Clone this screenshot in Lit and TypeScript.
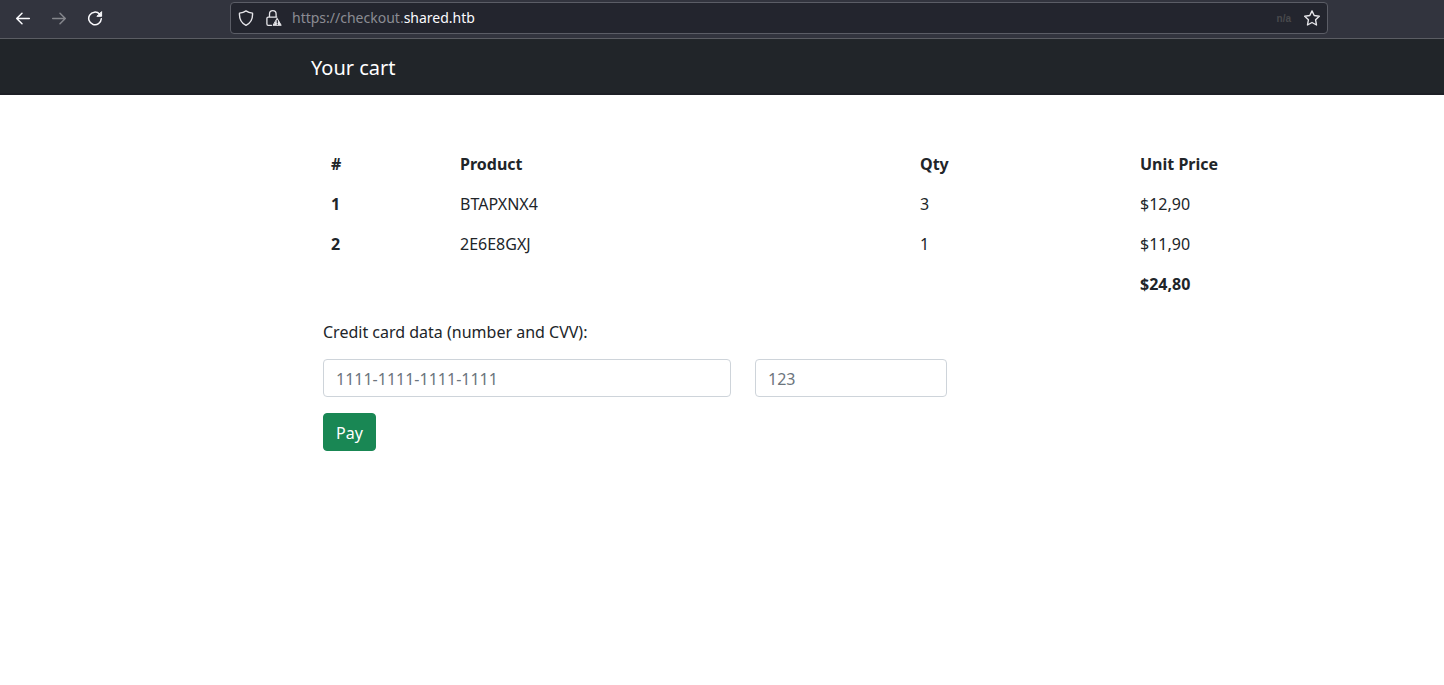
import { LitElement, html, css } from "lit";
import { customElement } from "lit/decorators.js";

interface CartItem {
  product: string;
  qty: number;
  price: string;
}

@customElement("browser-bar")
export class BrowserBar extends LitElement {
  static styles = css`
    :host {
      display: block;
    }
    .bar {
      display: flex;
      align-items: center;
      box-sizing: border-box;
      height: 39px;
      padding: 0 116px 3px 12px;
      background: #32343e;
      border-bottom: 1px solid #5b5d63;
    }
    .nav {
      display: flex;
      gap: 14px;
      margin-right: 124px;
    }
    button {
      display: grid;
      place-items: center;
      width: 22px;
      height: 22px;
      padding: 0;
      border: 0;
      background: none;
      color: #fbfbfe;
    }
    button:disabled {
      color: #85868c;
    }
    svg {
      display: block;
      fill: none;
      stroke: currentColor;
      stroke-width: 1.5;
      stroke-linecap: round;
      stroke-linejoin: round;
    }
    .address {
      display: flex;
      flex: 1;
      align-items: center;
      box-sizing: border-box;
      height: 32px;
      padding: 0 4px;
      background: #23252e;
      border: 1px solid #5b5d66;
      border-radius: 4px;
      color: #fbfbfe;
    }
    .address button {
      color: #e6e6ea;
    }
    .security {
      margin: 0 7px 0 6px;
    }
    .url {
      flex: 1;
      font-size: 14px;
      line-height: 20px;
      color: #8b8c93;
    }
    .host {
      color: #fbfbfe;
    }
    .tag {
      margin-right: 10px;
      padding-top: 2px;
      font: bold 10px/14px "Liberation Sans", Arial, sans-serif;
      color: #48494c;
    }
  `;

  render() {
    return html`
      <div class="bar">
        <div class="nav">
          <button aria-label="Back">
            <svg width="16" height="16" viewBox="0 0 16 16">
              <path d="M14.3 8.5H1.7M7 3.2L1.7 8.5L7 13.8" />
            </svg>
          </button>
          <button aria-label="Forward" disabled>
            <svg width="16" height="16" viewBox="0 0 16 16">
              <path d="M1.7 8.5h12.6M9 3.2l5.3 5.3L9 13.8" />
            </svg>
          </button>
          <button aria-label="Reload">
            <svg width="16" height="16" viewBox="0 0 16 16">
              <path d="M12.6 4.1A6.3 6.3 0 1 0 14.3 8.8" />
              <path d="M14.6 2v4.3h-4.3z" fill="currentColor" stroke-width="1" />
            </svg>
          </button>
        </div>
        <div class="address">
          <button aria-label="Tracking protection">
            <svg width="16" height="16" viewBox="0 0 16 16">
              <path d="M8 .9C6.2 2.2 3.9 2.9 1.5 3.1C1.1 8.7 3.2 13 8 15.3C12.8 13 14.9 8.7 14.5 3.1C12.1 2.9 9.8 2.2 8 .9Z" stroke-width="1.4" />
            </svg>
          </button>
          <button class="security" aria-label="Site information">
            <svg width="16" height="16" viewBox="0 0 16 16">
              <path d="M3.500 7V4a3.300 3.300 0 0 1 6.600 0v3M5.500 15.300H2.200a1.300 1.300 0 0 1-1.300-1.300V8.400A1.300 1.300 0 0 1 2.200 7.100H10.800" stroke-width="1.300" />
              <path d="M11.300 8.600L15.200 15.300H7.400Z" fill="currentColor" stroke-width="1" />
              <path d="M11.300 10.500v2.200M11.300 14.200v.1" stroke="#23252e" stroke-width="1.200" />
            </svg>
          </button>
          <span class="url">https://checkout.<span class="host">shared.htb</span></span>
          <span class="tag">n/a</span>
          <button aria-label="Bookmark this page">
            <svg width="16" height="16" viewBox="0 0 16 16">
              <path d="M8 .9L10.2 5.5L15.3 6.2L11.6 9.8L12.5 15L8 12.5L3.5 15L4.4 9.8L.7 6.2L5.8 5.5Z" stroke-width="1.4" />
            </svg>
          </button>
        </div>
      </div>
    `;
  }
}

@customElement("app-root")
export class AppRoot extends LitElement {
  static styles = css`
    :host {
      --gutter: max(12px, calc(50vw - 411px));
      display: block;
      min-height: 100vh;
      background: #fff;
      color: #212529;
      font: 16px/24px "Noto Sans", sans-serif;
    }
    .masthead {
      box-sizing: border-box;
      padding: 15px 12px 11px var(--gutter);
      background: #212529;
      border-bottom: 2px solid #1d1f25;
    }
    h1 {
      margin: 0;
      font-size: 20px;
      font-weight: 400;
      line-height: 28px;
      color: #fff;
    }
    main {
      padding: 49px 12px 48px var(--gutter);
    }
    .content {
      padding-left: 12px;
    }
    table {
      width: 100%;
      table-layout: fixed;
      border-collapse: collapse;
      margin-bottom: 16px;
    }
    th,
    td {
      height: 24px;
      padding: 8px;
      text-align: left;
      vertical-align: top;
    }
    .num {
      width: 113px;
    }
    .product {
      width: 444px;
    }
    .qty {
      width: 204px;
    }
    fieldset {
      margin: 0;
      padding: 0;
      border: 0;
    }
    legend {
      padding: 0;
      margin-bottom: 15px;
    }
    .fields {
      display: flex;
      gap: 24px;
      margin-bottom: 16px;
    }
    input {
      box-sizing: border-box;
      min-width: 0;
      height: 38px;
      padding: 7px 12px 5px;
      border: 1px solid #ced4da;
      border-radius: 4px;
      background: #fff;
      color: #212529;
      font: inherit;
    }
    input::placeholder {
      color: #6c757d;
      opacity: 1;
    }
    .card {
      flex: 0 1 408px;
    }
    .cvv {
      flex: 0 1 192px;
    }
    .pay {
      display: block;
      height: 38px;
      padding: 7px 12px 5px;
      border: 1px solid #198754;
      border-radius: 4px;
      background: #198754;
      color: #fff;
      font: inherit;
    }
  `;

  private items: CartItem[] = [
    { product: "BTAPXNX4", qty: 3, price: "$12,90" },
    { product: "2E6E8GXJ", qty: 1, price: "$11,90" },
  ];

  render() {
    return html`
      <browser-bar></browser-bar>
      <header class="masthead"><h1>Your cart</h1></header>
      <main>
        <div class="content">
          <table>
            <thead>
              <tr>
                <th class="num" scope="col">#</th>
                <th class="product" scope="col">Product</th>
                <th class="qty" scope="col">Qty</th>
                <th scope="col">Unit Price</th>
              </tr>
            </thead>
            <tbody>
              ${this.items.map(
                (item, i) => html`
                  <tr>
                    <th scope="row">${i + 1}</th>
                    <td>${item.product}</td>
                    <td>${item.qty}</td>
                    <td>${item.price}</td>
                  </tr>
                `
              )}
              <tr>
                <td colspan="3"></td>
                <th>$24,80</th>
              </tr>
            </tbody>
          </table>
          <form @submit=${(e: Event) => e.preventDefault()}>
            <fieldset>
              <legend>Credit card data (number and CVV):</legend>
              <div class="fields">
                <input class="card" aria-label="Card number" placeholder="1111-1111-1111-1111" />
                <input class="cvv" aria-label="CVV" placeholder="123" />
              </div>
            </fieldset>
            <button class="pay">Pay</button>
          </form>
        </div>
      </main>
    `;
  }
}
